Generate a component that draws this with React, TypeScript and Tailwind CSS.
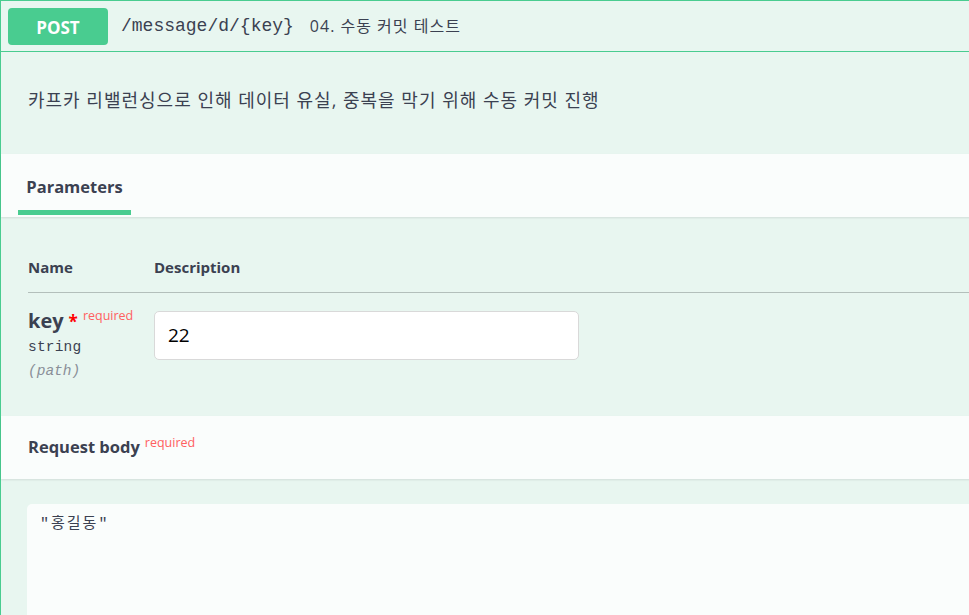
import React from 'react';

const sans = { fontFamily: '"Open Sans", "Noto Sans CJK KR", sans-serif' };
const mono = { fontFamily: '"Liberation Mono", "Noto Sans CJK KR", monospace' };

// Required marker next to a parameter / section title
const Required = ({ star = false }: { star?: boolean }) => (
  <>
    {star && <span className="ml-[5px] text-[17px] font-bold text-[#ff0000] relative top-[1px]">*</span>}
    <sup className="ml-[5px] text-[12.5px] font-normal text-[#ff6060] relative -top-[5px]">required</sup>
  </>
);

export default function App() {
  return (
    <div className="h-[615px] w-[969px] overflow-hidden bg-white" style={sans}>
      <div className="w-[1000px] border-l border-t border-[#49cc90] bg-[#e8f6f0] text-[#3b4151]">
        {/* summary */}
        <div className="flex h-[51px] items-center border-b border-[#49cc90] pl-[7px]">
          <div className="flex h-[37px] w-[100px] items-center justify-center rounded-[4px] bg-[#49cc90] pt-[3px] text-[17px] font-bold text-white">
            POST
          </div>
          <span className="ml-[13px] text-[18px] text-[#3b4151]" style={mono}>/message/d/{'{key}'}</span>
          <span className="ml-[16px] text-[16px] tracking-[1px] text-[#3b4151]">04. 수동 커밋 테스트</span>
        </div>

        {/* description */}
        <div className="h-[102px] px-[27px] pt-[35px]">
          <p className="text-[18px] leading-[26px] tracking-[1px] text-[#3b4151]">
            카프카 리밸런싱으로 인해 데이터 유실, 중복을 막기 위해 수동 커밋 진행
          </p>
        </div>

        {/* parameters header */}
        <div className="flex h-[63px] items-end bg-[#fafdfc] pl-[17px] shadow-[0_1px_2px_rgba(0,0,0,0.1)]">
          <div className="flex w-[113px] flex-col items-center">
            <span className="text-[16.5px] font-bold leading-[24px] text-[#3b4151]">Parameters</span>
            <div className="mt-[11px] mb-[2px] h-[5px] w-full bg-[#49cc90]" />
          </div>
        </div>

        {/* parameters table */}
        <div className="h-[199px] pl-[27px] pt-[26px]">
          <div className="flex h-[50px] items-center border-b border-[#b3bfbb] pb-[1px] text-[15px] font-bold">
            <span className="w-[126px]">Name</span>
            <span>Description</span>
          </div>
          <div className="flex pt-[18px]">
            <div className="-mt-[2px] flex w-[126px] flex-col">
              <div className="flex items-center leading-[24px]">
                <span className="text-[20px] font-bold">key</span>
                <Required star />
              </div>
              <span className="mt-[3px] text-[14.5px] leading-[22px] tracking-[0.2px]" style={mono}>string</span>
              <span className="mt-[1px] text-[14.5px] italic leading-[24px] text-[#8a8f98]" style={mono}>(path)</span>
            </div>
            <div className="flex h-[49px] w-[425px] items-center rounded-[5px] border border-[#d9d9d9] bg-white px-[13px] text-[19px] text-black">
              22
            </div>
          </div>
        </div>

        {/* request body header */}
        <div className="flex h-[63px] items-center bg-[#fafdfc] pl-[27px] shadow-[0_1px_2px_rgba(0,0,0,0.1)]">
          <span className="text-[16.5px] font-bold text-[#3b4151]">Request body</span>
          <Required />
        </div>

        {/* body */}
        <div className="h-[200px] pl-[26px] pt-[25px]">
          <div className="h-[200px] w-[960px] rounded-[5px] bg-[#fafdfc] px-[13px] pt-[10px] text-[15px] tracking-[2px] text-[#3b4151]" style={mono}>
            "홍길동"
          </div>
        </div>
      </div>
    </div>
  );
}
